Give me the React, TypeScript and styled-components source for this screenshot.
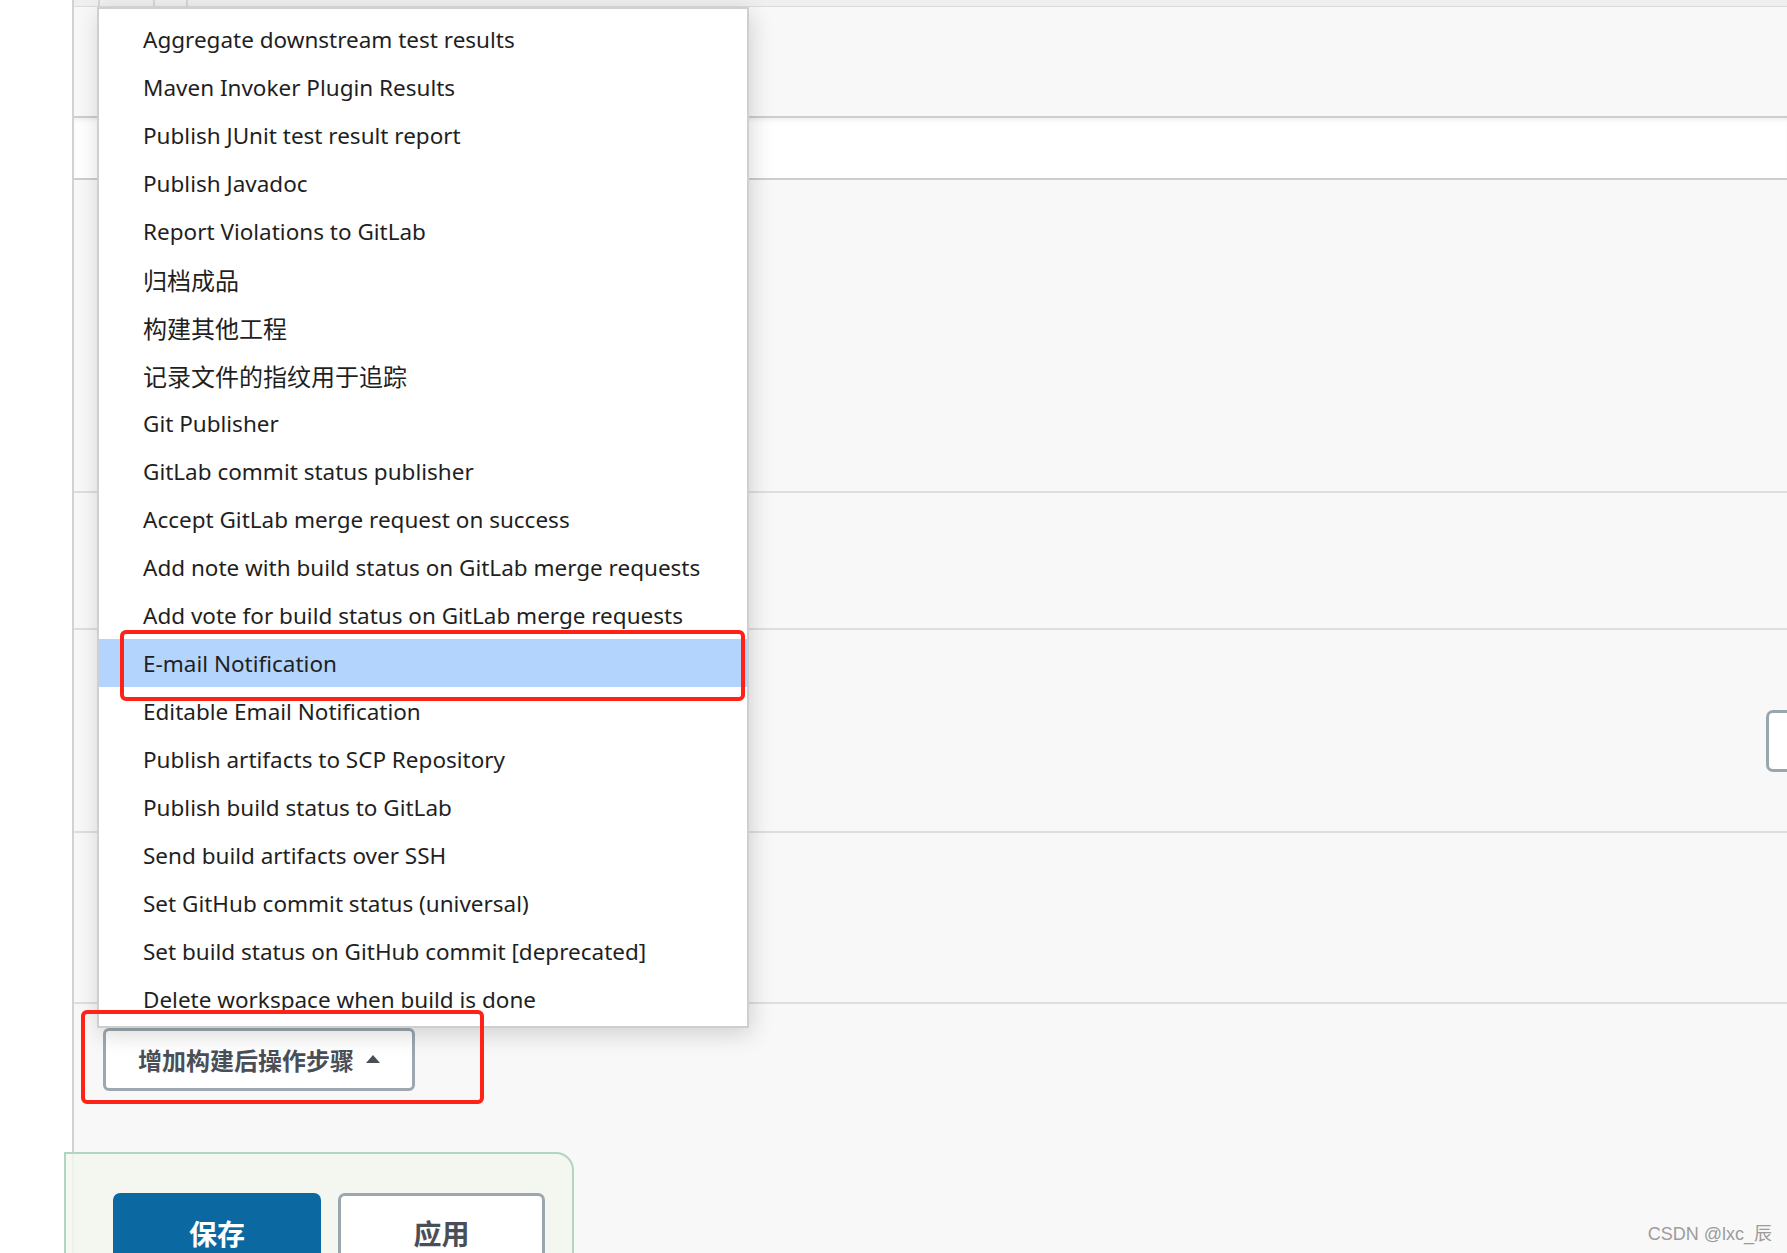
import React from "react";
import styled, { createGlobalStyle } from "styled-components";

const Global = createGlobalStyle`
  html, body { margin: 0; padding: 0; background: #fff; }
  body { font-family: "Noto Sans", "Noto Sans CJK SC", sans-serif; color: #222; }
`;

const Page = styled.div`
  position: relative;
  width: 1787px;
  height: 1253px;
  overflow: hidden;
  display: grid;
  grid-template-columns: 74px 1fr;
  background: #fff;
`;

const Gutter = styled.div`
  background: #fff;
  border-right: 2px solid #d2d2d2;
`;

const Main = styled.div`
  background: #f8f8f8;
  display: flex;
  flex-direction: column;
`;

const Section = styled.div<{ $h: number; $white?: boolean; $line?: string }>`
  height: ${(p) => p.$h}px;
  flex: none;
  background: ${(p) => (p.$white ? "#fff" : "#f8f8f8")};
  border-bottom: 2px solid ${(p) => p.$line || "#dedede"};
  box-shadow: ${(p) => (p.$white ? "inset 0 4px 6px -4px rgba(0,0,0,0.12)" : "none")};
  display: flex;
  flex-direction: column;
`;

const HeadStrip = styled.div`
  height: 6px;
  display: flex;
  background: #efefef;
  border-bottom: 1px solid #dcdcdc;
`;

const HeadCell = styled.div<{ $w: number }>`
  width: ${(p) => p.$w}px;
  flex: none;
  border-right: 2px solid #d6d6d6;
`;

const EdgeRow = styled.div`
  margin-top: 80px;
  display: flex;
  justify-content: flex-end;
`;

const EdgeButton = styled.div`
  width: 60px;
  height: 56px;
  margin-right: -45px;
  background: #fff;
  border: 3px solid #9aa6ae;
  border-radius: 7px;
`;

const ActionRow = styled.div`
  padding: 24px 0 0 29px;
  display: flex;
`;

const AddStepButton = styled.button`
  width: 312px;
  height: 63px;
  box-sizing: border-box;
  display: flex;
  align-items: center;
  gap: 10px;
  padding: 0 0 0 32px;
  background: #fff;
  border: 3px solid #9ca7af;
  border-radius: 6px;
  font-family: "Noto Sans CJK SC", sans-serif;
  font-weight: 700;
  font-size: 24px;
  color: #4a4f57;
`;

const Caret = styled.span`
  width: 0;
  height: 0;
  border-left: 7px solid transparent;
  border-right: 7px solid transparent;
  border-bottom: 8px solid #4a4f57;
  margin-left: 2px;
  margin-top: -2px;
`;

const BottomBar = styled.div`
  margin: 61px 0 0 -10px;
  width: 510px;
  height: 140px;
  box-sizing: border-box;
  border: 2px solid #b2d5bf;
  border-top-right-radius: 18px;
  background: rgba(242, 247, 238, 0.85);
  padding: 39px 0 0 47px;
  display: flex;
  gap: 17px;
  align-items: flex-start;
`;

const BigButton = styled.button<{ $primary?: boolean }>`
  width: ${(p) => (p.$primary ? 208 : 207)}px;
  height: 80px;
  box-sizing: border-box;
  border-radius: 7px;
  border: ${(p) => (p.$primary ? "none" : "3px solid #9ba6ae")};
  background: ${(p) => (p.$primary ? "#0c68a1" : "#fff")};
  color: ${(p) => (p.$primary ? "#fff" : "#4a4f57")};
  font-family: "Noto Sans CJK SC", sans-serif;
  font-weight: 700;
  font-size: 28px;
  padding: 0;
  display: flex;
  align-items: center;
  justify-content: center;
`;

const Menu = styled.ul`
  position: absolute;
  left: 97px;
  top: 7px;
  width: 652px;
  height: 1021px;
  box-sizing: border-box;
  margin: 0;
  padding: 6px 0 0 0;
  list-style: none;
  background: #fff;
  border: 2px solid #cfcfcf;
  box-shadow: 2px 6px 22px rgba(0, 0, 0, 0.16);
  overflow: hidden;
`;

const Item = styled.li<{ $active?: boolean; $cjk?: boolean }>`
  height: 48px;
  display: flex;
  align-items: center;
  padding-left: 44px;
  background: ${(p) => (p.$active ? "#b3d4fc" : "transparent")};
  font-family: "Noto Sans", "Noto Sans CJK SC", sans-serif;
  font-size: ${(p) => (p.$cjk ? 24 : 22.5)}px;
  color: #1f1f1f;
  white-space: nowrap;
`;

const RedBox = styled.div<{ $x: number; $y: number; $w: number; $h: number }>`
  position: absolute;
  left: ${(p) => p.$x}px;
  top: ${(p) => p.$y}px;
  width: ${(p) => p.$w}px;
  height: ${(p) => p.$h}px;
  box-sizing: border-box;
  border: 4px solid #ff2216;
  border-radius: 6px;
  pointer-events: none;
`;

const Watermark = styled.div`
  position: absolute;
  right: 15px;
  bottom: 8px;
  font-family: "Liberation Sans", "Noto Sans CJK SC", sans-serif;
  font-size: 18px;
  color: #9c9c9c;
`;

const items = [
  "Aggregate downstream test results",
  "Maven Invoker Plugin Results",
  "Publish JUnit test result report",
  "Publish Javadoc",
  "Report Violations to GitLab",
  "归档成品",
  "构建其他工程",
  "记录文件的指纹用于追踪",
  "Git Publisher",
  "GitLab commit status publisher",
  "Accept GitLab merge request on success",
  "Add note with build status on GitLab merge requests",
  "Add vote for build status on GitLab merge requests",
  "E-mail Notification",
  "Editable Email Notification",
  "Publish artifacts to SCP Repository",
  "Publish build status to GitLab",
  "Send build artifacts over SSH",
  "Set GitHub commit status (universal)",
  "Set build status on GitHub commit [deprecated]",
  "Delete workspace when build is done",
];

const isCjk = (t: string) => /[\u4e00-\u9fff]/.test(t);

export default function App() {
  return (
    <>
      <Global />
      <Page>
        <Gutter />
        <Main>
          <Section $h={116} $line="#cdcdcd">
            <HeadStrip>
              <HeadCell $w={24} />
              <HeadCell $w={53} />
              <HeadCell $w={31} />
            </HeadStrip>
          </Section>
          <Section $h={60} $white $line="#cdcdcd" />
          <Section $h={311} />
          <Section $h={135} />
          <Section $h={201}>
            <EdgeRow>
              <EdgeButton />
            </EdgeRow>
          </Section>
          <Section $h={169} />
          <ActionRow>
            <AddStepButton>
              增加构建后操作步骤
              <Caret />
            </AddStepButton>
          </ActionRow>
          <BottomBar>
            <BigButton $primary>保存</BigButton>
            <BigButton>应用</BigButton>
          </BottomBar>
        </Main>
        <Menu>
          {items.map((t) => (
            <Item key={t} $active={t === "E-mail Notification"} $cjk={isCjk(t)}>
              {t}
            </Item>
          ))}
        </Menu>
        <RedBox $x={120} $y={630} $w={625} $h={71} />
        <RedBox $x={81} $y={1010} $w={403} $h={94} />
        <Watermark>CSDN @lxc_辰</Watermark>
      </Page>
    </>
  );
}
